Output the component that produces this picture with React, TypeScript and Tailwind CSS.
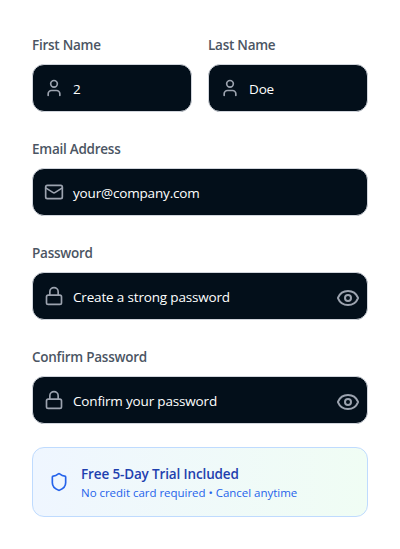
import React from "react";

const svgProps = {
  viewBox: "0 0 24 24",
  fill: "none",
  stroke: "currentColor",
  strokeWidth: 2,
  strokeLinecap: "round" as const,
  strokeLinejoin: "round" as const,
};

function UserIcon() {
  return (
    <svg {...svgProps} className="h-5 w-5">
      <path d="M19 21v-2a4 4 0 0 0-4-4H9a4 4 0 0 0-4 4v2" />
      <circle cx="12" cy="7" r="4" />
    </svg>
  );
}

function MailIcon() {
  return (
    <svg {...svgProps} className="h-5 w-5">
      <rect x="2" y="4" width="20" height="16" rx="2" />
      <path d="m22 7-8.97 5.7a1.94 1.94 0 0 1-2.06 0L2 7" />
    </svg>
  );
}

function LockIcon() {
  return (
    <svg {...svgProps} className="h-5 w-5">
      <rect x="3" y="11" width="18" height="11" rx="2" />
      <path d="M7 11V7a5 5 0 0 1 10 0v4" />
    </svg>
  );
}

function EyeIcon() {
  return (
    <svg {...svgProps} className="h-6 w-6">
      <path d="M2.06 12.35a1 1 0 0 1 0-.7 10.75 10.75 0 0 1 19.88 0 1 1 0 0 1 0 .7 10.75 10.75 0 0 1-19.88 0" />
      <circle cx="12" cy="12" r="3" />
    </svg>
  );
}

function ShieldIcon() {
  return (
    <svg {...svgProps} className="h-5 w-5 text-[#2563eb]">
      <path d="M20 13c0 5-3.5 7.5-7.66 8.95a1 1 0 0 1-.67-.01C7.5 20.5 4 18 4 13V6a1 1 0 0 1 1-1c2 0 4.5-1.2 6.24-2.72a1.17 1.17 0 0 1 1.52 0C14.51 3.81 17 5 19 5a1 1 0 0 1 1 1z" />
    </svg>
  );
}

interface FieldProps {
  label: string;
  value: string;
  icon: React.ReactNode;
  secret?: boolean;
}

function Field({ label, value, icon, secret }: FieldProps) {
  return (
    <div className="min-w-0">
      <div className="mb-[9px] flex h-5 items-center">
        <span className="whitespace-nowrap text-[13.5px] font-semibold tracking-[-0.25px] text-[#4b5563]">{label}</span>
      </div>
      <div className="flex h-12 items-center rounded-xl border border-gray-300 bg-[#030f1a] pr-[7px] pl-[11px] text-[#9ca3af]">
        {icon}
        <span className="mt-[2px] ml-[9px] whitespace-nowrap text-[13.5px] tracking-[-0.17px] text-white">{value}</span>
        {secret && (
          <span className="mt-1 ml-auto">
            <EyeIcon />
          </span>
        )}
      </div>
    </div>
  );
}

export default function App() {
  return (
    <main className="flex h-[549px] w-[400px] flex-col gap-[27px] bg-white px-8 pt-[35px] font-['Open_Sans',sans-serif]">
      <div className="grid grid-cols-2 gap-4">
        <Field label="First Name" value="2" icon={<UserIcon />} />
        <Field label="Last Name" value="Doe" icon={<UserIcon />} />
      </div>
      <Field label="Email Address" value="your@company.com" icon={<MailIcon />} />
      <Field label="Password" value="Create a strong password" icon={<LockIcon />} secret />
      <Field label="Confirm Password" value="Confirm your password" icon={<LockIcon />} secret />
      <div className="-mt-1 flex h-[70px] shrink-0 items-center rounded-xl border border-[#bfdbfe] bg-gradient-to-r from-[#eff6ff] to-[#f0fdf4] px-4">
        <ShieldIcon />
        <div className="mt-[3px] ml-3">
          <p className="whitespace-nowrap text-[13.5px] leading-[19px] font-semibold tracking-[-0.14px] text-[#1e40af]">Free 5-Day Trial Included</p>
          <p className="whitespace-nowrap text-[11.5px] leading-[18px] tracking-[-0.03px] text-[#2563eb]">No credit card required • Cancel anytime</p>
        </div>
      </div>
    </main>
  );
}
